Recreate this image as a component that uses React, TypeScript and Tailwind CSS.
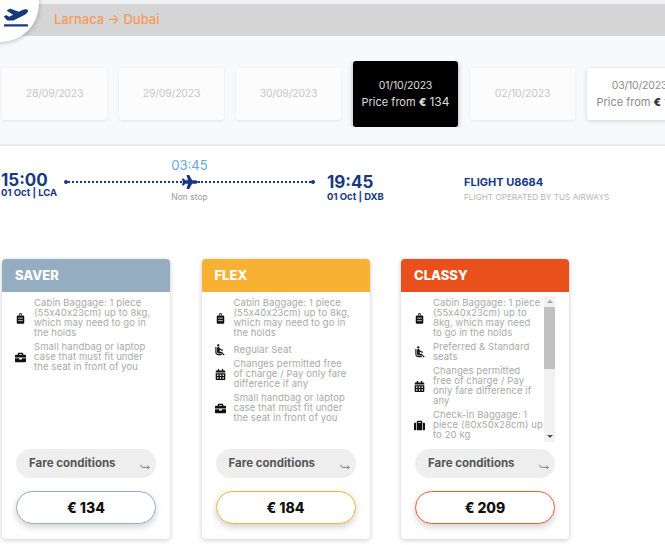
import React from "react";
import { FaPlaneDeparture, FaPlane, FaBriefcase, FaCalendarAlt, FaSuitcase } from "react-icons/fa";
import { MdAirlineSeatReclineNormal } from "react-icons/md";

function Cabin() {
  return (
    <svg viewBox="0 0 12 14" className="w-[9px] h-[11px]" fill="#111">
      <path d="M4 3V1.5C4 .7 4.7 0 5.5 0h1C7.300 0 8 .7 8 1.500V3H7V1.300H5V3z" />
      <rect x="1" y="3" width="10" height="11" rx="1.500" />
      <rect x="3" y="6" width="6" height="1" fill="#fff" />
      <rect x="3" y="9.500" width="6" height="1" fill="#fff" />
    </svg>
  );
}

const icons: Record<string, React.ReactNode> = {
  cabin: <Cabin />,
  bag: <FaBriefcase size={11} color="#111" />,
  seat: <MdAirlineSeatReclineNormal size={14} color="#111" />,
  cal: <FaCalendarAlt size={11} color="#111" />,
  check: <FaSuitcase size={11} color="#111" />,
};

type Item = { icon: string; lines: string[]; extra?: boolean };

function Row({ icon, lines, extra }: Item) {
  return (
    <div className={extra ? "flex items-center mt-[3px]" : "flex items-center"}>
      <div className="w-[17px] h-[10px] shrink-0 flex items-center justify-center">{icons[icon]}</div>
      <div className="ml-[5px] text-[9.5px] leading-[10px] text-[#a9a9a9] whitespace-nowrap tracking-[0.1px]">
        {lines.map((l) => (
          <div key={l}>{l}</div>
        ))}
      </div>
    </div>
  );
}

const cabin = ["Cabin Baggage: 1 piece", "(55x40x23cm) up to 8kg,", "which may need to go in", "the holds"];
const small = ["Small handbag or laptop", "case that must fit under", "the seat in front of you"];

function Actions({ price, color }: { price: string; color: string }) {
  return (
    <div className="px-[14px]">
      <div className="h-[29px] rounded-full bg-[#eeeeee] flex items-center justify-between pl-[13px] pr-[6px]">
        <span className="text-[11.5px] font-bold text-[#555555]">Fare conditions</span>
        <svg viewBox="0 0 12 8" className="w-[10px] h-[7px] mt-[6px]" fill="none" stroke="#666" strokeWidth="1">
          <path d="M1 2c0 2 1 3 2 3h8M9 3l2 2-2 2" />
        </svg>
      </div>
      <div
        className="mt-[13px] h-[33px] rounded-full bg-white border-[1.5px] flex items-center justify-center text-[14px] font-extrabold text-[#111] shadow-[0_3px_7px_rgba(0,0,0,0.18)]"
        style={{ borderColor: color }}
      >
        {price}
      </div>
    </div>
  );
}

function Card({ name, head, border, price, items, scroll }: { name: string; head: string; border: string; price: string; items: Item[]; scroll?: boolean }) {
  return (
    <div className="w-[168px] h-[280px] shrink-0 bg-white rounded-[4px] shadow-[0_1px_5px_rgba(0,0,0,0.22)] flex flex-col overflow-hidden">
      <div className="h-[33px] shrink-0 flex items-center pl-[13px] text-[13px] font-extrabold text-white" style={{ backgroundColor: head }}>
        {name}
      </div>
      <div className="h-[157px] shrink-0 pt-[6px] pb-[7px] pl-[10px] pr-[14px] flex overflow-hidden">
        <div className="flex-1 flex flex-col gap-[4px] overflow-hidden">
          {items.map((it) => (
            <Row key={it.lines[0]} {...it} />
          ))}
        </div>
        {scroll && (
          <div className="w-[11px] shrink-0 bg-[#f1f1f1] flex flex-col -mt-[2px] items-center">
            <div className="h-[11px] flex items-center justify-center">
              <div className="w-0 h-0 border-x-[3px] border-x-transparent border-b-[3px] border-b-[#a3a3a3]" />
            </div>
            <div className="w-full h-[62px] bg-[#c1c1c1]" />
            <div className="flex-1" />
            <div className="h-[11px] flex items-center justify-center">
              <div className="w-0 h-0 border-x-[3px] border-x-transparent border-t-[3px] border-t-[#505050]" />
            </div>
          </div>
        )}
      </div>
      <Actions price={price} color={border} />
    </div>
  );
}

function DateCard({ date, price, active }: { date: string; price?: string; active?: boolean }) {
  if (active) {
    return (
      <div className="w-[105px] h-[66px] shrink-0 bg-black rounded-[3px] shadow-[0_2px_5px_rgba(0,0,0,0.3)] flex flex-col items-center justify-center text-[11px] leading-[16px] text-[#dddddd]">
        <div className="text-[10.5px] tracking-[-0.2px]">{date}</div>
        <div>
          Price from <b className="font-extrabold">€</b> <span className="text-[12px]">{price}</span>
        </div>
      </div>
    );
  }
  if (price) {
    return (
      <div className="w-[105px] h-[52px] shrink-0 bg-white rounded-[3px] shadow-[0_1px_4px_rgba(0,0,0,0.16)] flex flex-col items-center justify-center text-[11px] leading-[16px] text-[#8c8c8c] whitespace-nowrap">
        <div className="text-[10.5px] tracking-[-0.2px]">{date}</div>
        <div>
          Price from <b className="font-extrabold text-[#333]">€</b> <span className="text-[#333]">{price}</span>
        </div>
      </div>
    );
  }
  return (
    <div className="w-[105px] h-[52px] shrink-0 bg-[#fcfcfd] rounded-[3px] shadow-[0_1px_3px_rgba(0,0,0,0.08)] flex items-center justify-center text-[10.5px] tracking-[-0.2px] text-[#c8c8c8]">
      {date}
    </div>
  );
}

export default function App() {
  return (
    <div className="relative w-[665px] h-[545px] overflow-hidden bg-white font-['Inter',sans-serif]">
      <div className="bg-[#f7f9fb] h-[144px]">
        <div className="h-[4px] bg-[#eff1f5]" />
        <div className="h-[32px] bg-[#d5d5d5] flex items-center pl-[54px] text-[13px] font-medium text-[#f79a5b]">
          Larnaca → Dubai
        </div>
        <div className="mt-[25px] h-[66px] pl-[2px] flex items-center gap-[12px] overflow-hidden">
          <DateCard date="28/09/2023" />
          <DateCard date="29/09/2023" />
          <DateCard date="30/09/2023" />
          <DateCard date="01/10/2023" price="134" active />
          <DateCard date="02/10/2023" />
          <DateCard date="03/10/2023" price="134" />
        </div>
      </div>
      <div className="absolute left-[-37px] top-[-34px] w-[76px] h-[76px] rounded-full bg-white shadow-[0_1px_5px_rgba(0,0,0,0.25)] flex items-end justify-end pr-[11px] pb-[13px]">
        <FaPlaneDeparture size={24} color="#17387f" />
      </div>

      <div className="h-[2px] bg-[#e9ebef]" />

      <div className="h-[113px] flex pl-[1px] text-[#17387f]">
        <div className="w-[326px] flex items-start">
          <div className="w-[60px] pt-[26px]">
            <div className="text-[17px] leading-[16px] font-bold">15:00</div>
            <div className="text-[9.5px] leading-[10px] font-bold">01 Oct | LCA</div>
          </div>
          <div className="w-[251px] ml-[3px] pt-[12px] flex flex-col items-center">
            <div className="text-[13px] leading-[14px] text-[#62a9ea]">03:45</div>
            <div className="w-full flex items-center mt-[2px]">
              <div className="w-[4px] h-[4px] rounded-full bg-[#17387f]" />
              <div className="flex-1 border-t-2 border-dotted border-[#17387f]" />
              <FaPlane size={16} color="#17387f" />
              <div className="flex-1 border-t-2 border-dotted border-[#17387f]" />
              <div className="w-[4px] h-[4px] rounded-full bg-[#17387f]" />
            </div>
            <div className="text-[8.5px] leading-[10px] mt-[2px] text-[#9a9a9a]">Non stop</div>
          </div>
        </div>
        <div className="w-[137px] pt-[27px]">
          <div className="text-[17px] leading-[18px] font-bold">19:45</div>
          <div className="text-[9.5px] leading-[10px] font-bold mt-[1px]">01 Oct | DXB</div>
        </div>
        <div className="pt-[30px]">
          <div className="text-[11px] leading-[12px] font-bold">FLIGHT U8684</div>
          <div className="text-[8.2px] leading-[10px] mt-[4px] text-[#b5b5b5] whitespace-nowrap">FLIGHT OPERATED BY TUS AIRWAYS</div>
        </div>
      </div>

      <div className="pl-[2px] flex gap-[31.5px]">
        <Card name="SAVER" head="#94adc1" border="#94adc1" price="€ 134" items={[{ icon: "cabin", lines: cabin }, { icon: "bag", lines: small }]} />
        <Card
          name="FLEX"
          head="#f8b133"
          border="#f8b133"
          price="€ 184"
          items={[
            { icon: "cabin", lines: cabin },
            { icon: "seat", lines: ["Regular Seat"], extra: true },
            { icon: "cal", lines: ["Changes permitted free", "of charge / Pay only fare", "difference if any"] },
            { icon: "bag", lines: small },
          ]}
        />
        <Card
          name="CLASSY"
          head="#e9501c"
          border="#e9602f"
          price="€ 209"
          scroll
          items={[
            { icon: "cabin", lines: ["Cabin Baggage: 1 piece", "(55x40x23cm) up to", "8kg, which may need", "to go in the holds"] },
            { icon: "seat", lines: ["Preferred & Standard", "seats"] },
            { icon: "cal", lines: ["Changes permitted", "free of charge / Pay", "only fare difference if", "any"] },
            { icon: "check", lines: ["Check-in Baggage: 1", "piece (80x50x28cm) up", "to 20 kg"] },
          ]}
        />
      </div>
    </div>
  );
}
